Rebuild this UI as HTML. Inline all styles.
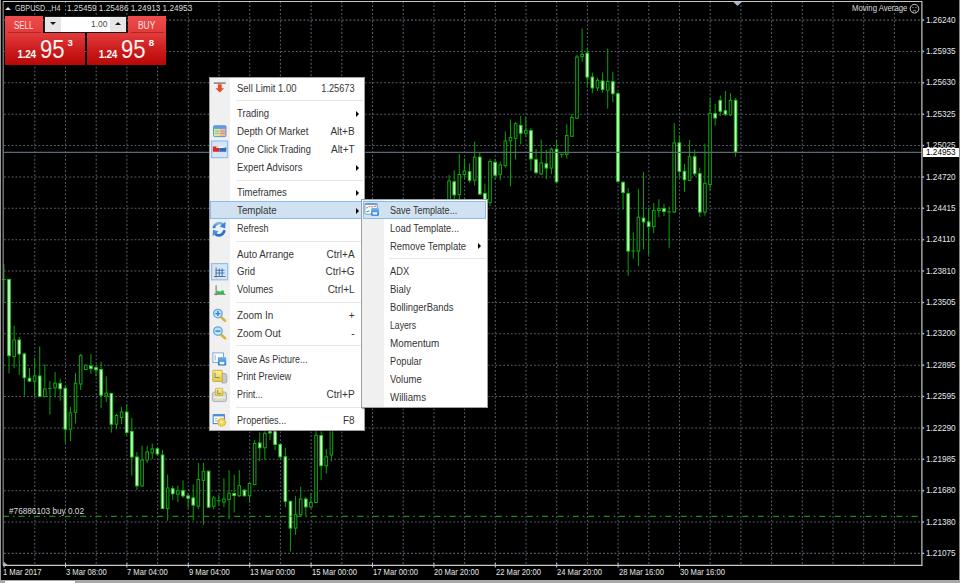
<!DOCTYPE html><html><head><meta charset="utf-8"><style>
*{margin:0;padding:0;box-sizing:border-box}
html,body{width:960px;height:583px;overflow:hidden;background:#000;font-family:"Liberation Sans", sans-serif}
.abs{position:absolute;white-space:nowrap}
svg.chart{position:absolute;left:0;top:0}
.g{stroke:#58626e;stroke-width:1.05;stroke-dasharray:1.8 2.04}
.w{stroke:#00a800;stroke-width:1}
.bb{stroke:#20c820;stroke-width:1;fill:#d8ffd0}
.bu{stroke:#10a810;stroke-width:1;fill:#000}
.pl{position:absolute;left:926px;font-size:8.2px;color:#e6e6e6;line-height:10px;height:10px}
.tl{position:absolute;top:568px;font-size:8.2px;color:#e6e6e6;line-height:10px;transform:scaleX(0.93);transform-origin:0 0}
.menu{position:absolute;background:#fff;border:1px solid #a0a0a0;box-shadow:1px 1px 1px rgba(0,0,0,.35)}
.ic{position:absolute;left:0;top:0;bottom:0;background:#f0f0f0}
.mi{position:absolute;font-size:10px;color:#353535;line-height:12px;height:12px}
.sc{position:absolute;font-size:10px;color:#353535;line-height:12px;height:12px;text-align:right}
.sep{position:absolute;height:1px;background:#e6e6e6}
.arr{position:absolute;width:0;height:0;border-top:3px solid transparent;border-bottom:3px solid transparent;border-left:3px solid #000}
</style></head><body>
<svg class="chart" width="960" height="583" viewBox="0 0 960 583">
<line x1="4" y1="20.10" x2="921" y2="20.10" class="g"/><line x1="4" y1="51.47" x2="921" y2="51.47" class="g"/><line x1="4" y1="82.84" x2="921" y2="82.84" class="g"/><line x1="4" y1="114.21" x2="921" y2="114.21" class="g"/><line x1="4" y1="145.58" x2="921" y2="145.58" class="g"/><line x1="4" y1="176.95" x2="921" y2="176.95" class="g"/><line x1="4" y1="208.32" x2="921" y2="208.32" class="g"/><line x1="4" y1="239.69" x2="921" y2="239.69" class="g"/><line x1="4" y1="271.06" x2="921" y2="271.06" class="g"/><line x1="4" y1="302.43" x2="921" y2="302.43" class="g"/><line x1="4" y1="333.80" x2="921" y2="333.80" class="g"/><line x1="4" y1="365.17" x2="921" y2="365.17" class="g"/><line x1="4" y1="396.54" x2="921" y2="396.54" class="g"/><line x1="4" y1="427.91" x2="921" y2="427.91" class="g"/><line x1="4" y1="459.28" x2="921" y2="459.28" class="g"/><line x1="4" y1="490.65" x2="921" y2="490.65" class="g"/><line x1="4" y1="522.02" x2="921" y2="522.02" class="g"/><line x1="4" y1="553.39" x2="921" y2="553.39" class="g"/><line x1="34.80" y1="1.4" x2="34.80" y2="565" class="g"/><line x1="65.50" y1="1.4" x2="65.50" y2="565" class="g"/><line x1="96.20" y1="1.4" x2="96.20" y2="565" class="g"/><line x1="126.90" y1="1.4" x2="126.90" y2="565" class="g"/><line x1="157.60" y1="1.4" x2="157.60" y2="565" class="g"/><line x1="188.30" y1="1.4" x2="188.30" y2="565" class="g"/><line x1="219.00" y1="1.4" x2="219.00" y2="565" class="g"/><line x1="249.70" y1="1.4" x2="249.70" y2="565" class="g"/><line x1="280.40" y1="1.4" x2="280.40" y2="565" class="g"/><line x1="311.10" y1="1.4" x2="311.10" y2="565" class="g"/><line x1="341.80" y1="1.4" x2="341.80" y2="565" class="g"/><line x1="372.50" y1="1.4" x2="372.50" y2="565" class="g"/><line x1="403.20" y1="1.4" x2="403.20" y2="565" class="g"/><line x1="433.90" y1="1.4" x2="433.90" y2="565" class="g"/><line x1="464.60" y1="1.4" x2="464.60" y2="565" class="g"/><line x1="495.30" y1="1.4" x2="495.30" y2="565" class="g"/><line x1="526.00" y1="1.4" x2="526.00" y2="565" class="g"/><line x1="556.70" y1="1.4" x2="556.70" y2="565" class="g"/><line x1="587.40" y1="1.4" x2="587.40" y2="565" class="g"/><line x1="618.10" y1="1.4" x2="618.10" y2="565" class="g"/><line x1="648.80" y1="1.4" x2="648.80" y2="565" class="g"/><line x1="679.50" y1="1.4" x2="679.50" y2="565" class="g"/><line x1="710.20" y1="1.4" x2="710.20" y2="565" class="g"/><line x1="740.90" y1="1.4" x2="740.90" y2="565" class="g"/><line x1="771.60" y1="1.4" x2="771.60" y2="565" class="g"/><line x1="802.30" y1="1.4" x2="802.30" y2="565" class="g"/><line x1="833.00" y1="1.4" x2="833.00" y2="565" class="g"/><line x1="863.70" y1="1.4" x2="863.70" y2="565" class="g"/><line x1="894.40" y1="1.4" x2="894.40" y2="565" class="g"/><line x1="3.90" y1="264.0" x2="3.90" y2="302.6" class="w"/><line x1="1.90" y1="279.5" x2="5.90" y2="279.5" class="w"/><line x1="9.02" y1="278.7" x2="9.02" y2="373.5" class="w"/><rect x="7.72" y="279.4" width="2.6" height="76.4" class="bb"/><line x1="14.13" y1="325.7" x2="14.13" y2="368.2" class="w"/><rect x="12.83" y="340.0" width="2.6" height="16.6" class="bu"/><line x1="19.25" y1="337.0" x2="19.25" y2="375.0" class="w"/><rect x="17.95" y="340.0" width="2.6" height="14.0" class="bb"/><line x1="24.37" y1="352.8" x2="24.37" y2="395.7" class="w"/><rect x="23.07" y="354.0" width="2.6" height="23.7" class="bb"/><line x1="29.48" y1="368.0" x2="29.48" y2="382.0" class="w"/><rect x="28.18" y="378.2" width="2.6" height="2.9" class="bb"/><line x1="34.60" y1="358.0" x2="34.60" y2="396.6" class="w"/><rect x="33.30" y="376.0" width="2.6" height="5.1" class="bu"/><line x1="39.72" y1="346.3" x2="39.72" y2="397.0" class="w"/><rect x="38.42" y="376.0" width="2.6" height="20.6" class="bb"/><line x1="44.84" y1="364.3" x2="44.84" y2="397.4" class="w"/><rect x="43.54" y="388.9" width="2.6" height="7.7" class="bu"/><line x1="49.95" y1="381.0" x2="49.95" y2="414.6" class="w"/><line x1="47.95" y1="388.4" x2="51.95" y2="388.4" class="w"/><line x1="55.07" y1="372.0" x2="55.07" y2="397.4" class="w"/><rect x="53.77" y="383.2" width="2.6" height="4.6" class="bu"/><line x1="60.19" y1="378.5" x2="60.19" y2="400.6" class="w"/><rect x="58.89" y="383.4" width="2.6" height="5.4" class="bb"/><line x1="65.30" y1="384.9" x2="65.30" y2="442.9" class="w"/><rect x="64.00" y="388.3" width="2.6" height="40.9" class="bb"/><line x1="70.42" y1="406.9" x2="70.42" y2="441.2" class="w"/><rect x="69.12" y="412.8" width="2.6" height="16.4" class="bu"/><line x1="75.54" y1="372.9" x2="75.54" y2="423.5" class="w"/><rect x="74.24" y="383.2" width="2.6" height="29.1" class="bu"/><line x1="80.66" y1="354.0" x2="80.66" y2="390.0" class="w"/><rect x="79.36" y="355.7" width="2.6" height="28.3" class="bu"/><line x1="85.77" y1="365.0" x2="85.77" y2="370.0" class="w"/><rect x="84.47" y="365.2" width="2.6" height="4.3" class="bu"/><line x1="90.89" y1="354.0" x2="90.89" y2="373.7" class="w"/><rect x="89.59" y="366.0" width="2.6" height="2.6" class="bb"/><line x1="96.01" y1="365.0" x2="96.01" y2="376.3" class="w"/><rect x="94.71" y="367.7" width="2.6" height="2.1" class="bb"/><line x1="101.12" y1="361.7" x2="101.12" y2="408.0" class="w"/><rect x="99.82" y="369.5" width="2.6" height="25.7" class="bb"/><line x1="106.24" y1="376.3" x2="106.24" y2="402.0" class="w"/><rect x="104.94" y="393.1" width="2.6" height="2.9" class="bu"/><line x1="111.36" y1="392.6" x2="111.36" y2="432.6" class="w"/><rect x="110.06" y="393.5" width="2.6" height="30.7" class="bb"/><line x1="116.47" y1="413.8" x2="116.47" y2="429.2" class="w"/><rect x="115.17" y="415.5" width="2.6" height="8.7" class="bu"/><line x1="121.59" y1="406.9" x2="121.59" y2="424.0" class="w"/><rect x="120.29" y="412.0" width="2.6" height="5.5" class="bu"/><line x1="126.71" y1="404.3" x2="126.71" y2="435.0" class="w"/><rect x="125.41" y="412.0" width="2.6" height="20.5" class="bb"/><line x1="131.82" y1="418.0" x2="131.82" y2="475.6" class="w"/><rect x="130.52" y="431.5" width="2.6" height="25.5" class="bb"/><line x1="136.94" y1="451.9" x2="136.94" y2="490.0" class="w"/><rect x="135.64" y="457.0" width="2.6" height="28.9" class="bb"/><line x1="142.06" y1="445.7" x2="142.06" y2="487.0" class="w"/><rect x="140.76" y="460.1" width="2.6" height="25.8" class="bu"/><line x1="147.18" y1="445.7" x2="147.18" y2="463.2" class="w"/><rect x="145.88" y="451.9" width="2.6" height="8.2" class="bu"/><line x1="152.29" y1="443.7" x2="152.29" y2="459.0" class="w"/><rect x="150.99" y="448.8" width="2.6" height="4.2" class="bu"/><line x1="157.41" y1="447.8" x2="157.41" y2="456.0" class="w"/><rect x="156.11" y="448.8" width="2.6" height="5.2" class="bb"/><line x1="162.53" y1="449.8" x2="162.53" y2="509.0" class="w"/><rect x="161.23" y="455.0" width="2.6" height="53.5" class="bb"/><line x1="167.64" y1="474.5" x2="167.64" y2="520.9" class="w"/><rect x="166.34" y="488.0" width="2.6" height="20.5" class="bu"/><line x1="172.76" y1="485.9" x2="172.76" y2="500.0" class="w"/><rect x="171.46" y="488.7" width="2.6" height="5.1" class="bb"/><line x1="177.88" y1="485.6" x2="177.88" y2="502.0" class="w"/><rect x="176.58" y="490.7" width="2.6" height="3.5" class="bu"/><line x1="183.00" y1="480.4" x2="183.00" y2="498.0" class="w"/><rect x="181.69" y="490.7" width="2.6" height="5.2" class="bb"/><line x1="188.11" y1="492.8" x2="188.11" y2="508.2" class="w"/><rect x="186.81" y="495.9" width="2.6" height="2.4" class="bb"/><line x1="193.23" y1="484.5" x2="193.23" y2="520.6" class="w"/><rect x="191.93" y="497.9" width="2.6" height="7.2" class="bb"/><line x1="198.35" y1="462.9" x2="198.35" y2="509.3" class="w"/><rect x="197.05" y="479.4" width="2.6" height="26.8" class="bu"/><line x1="203.46" y1="462.9" x2="203.46" y2="524.7" class="w"/><rect x="202.16" y="471.2" width="2.6" height="9.2" class="bu"/><line x1="208.58" y1="471.2" x2="208.58" y2="507.2" class="w"/><rect x="207.28" y="471.2" width="2.6" height="36.0" class="bb"/><line x1="213.70" y1="495.9" x2="213.70" y2="509.3" class="w"/><rect x="212.40" y="497.9" width="2.6" height="8.3" class="bu"/><line x1="218.81" y1="495.0" x2="218.81" y2="505.0" class="w"/><line x1="216.81" y1="500.6" x2="220.81" y2="500.6" class="w"/><line x1="223.93" y1="478.4" x2="223.93" y2="507.2" class="w"/><rect x="222.63" y="499.0" width="2.6" height="3.0" class="bu"/><line x1="229.05" y1="470.1" x2="229.05" y2="519.2" class="w"/><rect x="227.75" y="493.2" width="2.6" height="6.3" class="bu"/><line x1="234.16" y1="474.6" x2="234.16" y2="512.5" class="w"/><rect x="232.86" y="493.5" width="2.6" height="2.0" class="bb"/><line x1="239.28" y1="470.1" x2="239.28" y2="496.9" class="w"/><rect x="237.98" y="485.7" width="2.6" height="10.1" class="bu"/><line x1="244.40" y1="489.0" x2="244.40" y2="496.5" class="w"/><rect x="243.10" y="490.2" width="2.6" height="5.6" class="bb"/><line x1="249.52" y1="482.4" x2="249.52" y2="502.5" class="w"/><rect x="248.22" y="483.5" width="2.6" height="12.3" class="bu"/><line x1="254.63" y1="440.0" x2="254.63" y2="485.0" class="w"/><rect x="253.33" y="443.4" width="2.6" height="41.2" class="bu"/><line x1="259.75" y1="432.2" x2="259.75" y2="461.2" class="w"/><rect x="258.45" y="443.0" width="2.6" height="4.8" class="bb"/><line x1="264.87" y1="430.0" x2="264.87" y2="460.1" class="w"/><rect x="263.57" y="433.3" width="2.6" height="14.5" class="bu"/><line x1="269.98" y1="425.0" x2="269.98" y2="440.0" class="w"/><rect x="268.68" y="428.0" width="2.6" height="5.0" class="bb"/><line x1="275.10" y1="420.0" x2="275.10" y2="450.0" class="w"/><rect x="273.80" y="425.0" width="2.6" height="19.5" class="bb"/><line x1="280.22" y1="443.4" x2="280.22" y2="459.0" class="w"/><rect x="278.92" y="444.5" width="2.6" height="12.3" class="bb"/><line x1="285.33" y1="447.8" x2="285.33" y2="507.0" class="w"/><rect x="284.03" y="456.8" width="2.6" height="44.5" class="bb"/><line x1="290.45" y1="501.3" x2="290.45" y2="551.5" class="w"/><rect x="289.15" y="501.3" width="2.6" height="26.8" class="bb"/><line x1="295.57" y1="495.8" x2="295.57" y2="534.8" class="w"/><rect x="294.27" y="514.7" width="2.6" height="13.4" class="bu"/><line x1="300.69" y1="486.9" x2="300.69" y2="517.0" class="w"/><rect x="299.39" y="499.1" width="2.6" height="15.6" class="bu"/><line x1="305.80" y1="496.9" x2="305.80" y2="515.8" class="w"/><rect x="304.50" y="499.1" width="2.6" height="7.8" class="bb"/><line x1="310.92" y1="493.5" x2="310.92" y2="508.0" class="w"/><rect x="309.62" y="502.5" width="2.6" height="4.5" class="bu"/><line x1="316.04" y1="428.0" x2="316.04" y2="503.0" class="w"/><rect x="314.74" y="435.3" width="2.6" height="67.2" class="bu"/><line x1="321.15" y1="420.0" x2="321.15" y2="480.2" class="w"/><rect x="319.85" y="435.6" width="2.6" height="30.1" class="bb"/><line x1="326.27" y1="449.0" x2="326.27" y2="473.5" class="w"/><rect x="324.97" y="456.8" width="2.6" height="8.9" class="bu"/><line x1="331.39" y1="410.0" x2="331.39" y2="461.2" class="w"/><rect x="330.09" y="420.0" width="2.6" height="35.0" class="bu"/><line x1="449.08" y1="174.8" x2="449.08" y2="215.0" class="w"/><rect x="447.78" y="181.0" width="2.6" height="24.0" class="bu"/><line x1="454.20" y1="170.2" x2="454.20" y2="205.0" class="w"/><rect x="452.90" y="181.8" width="2.6" height="13.1" class="bb"/><line x1="459.31" y1="154.0" x2="459.31" y2="200.0" class="w"/><rect x="458.01" y="174.5" width="2.6" height="20.1" class="bu"/><line x1="464.43" y1="158.6" x2="464.43" y2="178.7" class="w"/><rect x="463.13" y="171.0" width="2.6" height="3.5" class="bu"/><line x1="469.55" y1="163.3" x2="469.55" y2="182.6" class="w"/><rect x="468.25" y="171.7" width="2.6" height="8.5" class="bb"/><line x1="474.66" y1="141.6" x2="474.66" y2="185.6" class="w"/><rect x="473.36" y="157.1" width="2.6" height="23.1" class="bu"/><line x1="479.78" y1="152.5" x2="479.78" y2="195.0" class="w"/><rect x="478.48" y="157.1" width="2.6" height="37.0" class="bb"/><line x1="484.90" y1="183.8" x2="484.90" y2="210.0" class="w"/><rect x="483.60" y="193.4" width="2.6" height="6.6" class="bb"/><line x1="490.01" y1="158.9" x2="490.01" y2="206.0" class="w"/><rect x="488.71" y="161.5" width="2.6" height="41.1" class="bu"/><line x1="495.13" y1="158.9" x2="495.13" y2="179.5" class="w"/><rect x="493.83" y="162.3" width="2.6" height="12.9" class="bb"/><line x1="500.25" y1="161.5" x2="500.25" y2="180.3" class="w"/><rect x="498.95" y="164.9" width="2.6" height="9.4" class="bu"/><line x1="505.37" y1="131.4" x2="505.37" y2="167.5" class="w"/><rect x="504.07" y="140.9" width="2.6" height="24.8" class="bu"/><line x1="510.48" y1="119.4" x2="510.48" y2="186.3" class="w"/><rect x="509.18" y="137.4" width="2.6" height="3.5" class="bu"/><line x1="515.60" y1="122.0" x2="515.60" y2="159.7" class="w"/><rect x="514.30" y="123.7" width="2.6" height="14.6" class="bu"/><line x1="520.72" y1="116.0" x2="520.72" y2="144.3" class="w"/><rect x="519.42" y="125.4" width="2.6" height="7.8" class="bb"/><line x1="525.83" y1="116.9" x2="525.83" y2="136.6" class="w"/><rect x="524.53" y="130.6" width="2.6" height="2.6" class="bu"/><line x1="530.95" y1="128.0" x2="530.95" y2="170.9" class="w"/><rect x="529.65" y="130.6" width="2.6" height="28.3" class="bb"/><line x1="536.07" y1="148.6" x2="536.07" y2="174.3" class="w"/><rect x="534.77" y="159.7" width="2.6" height="12.9" class="bb"/><line x1="541.18" y1="139.7" x2="541.18" y2="175.2" class="w"/><rect x="539.88" y="162.9" width="2.6" height="11.1" class="bu"/><line x1="546.30" y1="150.0" x2="546.30" y2="179.2" class="w"/><rect x="545.00" y="163.8" width="2.6" height="4.2" class="bb"/><line x1="551.42" y1="147.5" x2="551.42" y2="174.0" class="w"/><rect x="550.12" y="149.2" width="2.6" height="18.8" class="bu"/><line x1="556.54" y1="139.7" x2="556.54" y2="182.6" class="w"/><rect x="555.24" y="149.2" width="2.6" height="32.6" class="bb"/><line x1="561.65" y1="153.5" x2="561.65" y2="157.8" class="w"/><line x1="559.65" y1="154.3" x2="563.65" y2="154.3" class="w"/><line x1="566.77" y1="124.3" x2="566.77" y2="158.6" class="w"/><rect x="565.47" y="135.5" width="2.6" height="18.8" class="bu"/><line x1="571.89" y1="114.0" x2="571.89" y2="137.0" class="w"/><rect x="570.59" y="117.4" width="2.6" height="18.9" class="bu"/><line x1="577.00" y1="54.7" x2="577.00" y2="119.2" class="w"/><rect x="575.70" y="57.0" width="2.6" height="61.3" class="bu"/><line x1="582.12" y1="28.5" x2="582.12" y2="61.7" class="w"/><rect x="580.82" y="54.3" width="2.6" height="2.4" class="bu"/><line x1="587.24" y1="47.8" x2="587.24" y2="86.4" class="w"/><rect x="585.94" y="53.2" width="2.6" height="23.9" class="bb"/><line x1="592.36" y1="72.5" x2="592.36" y2="93.3" class="w"/><rect x="591.06" y="77.1" width="2.6" height="10.8" class="bb"/><line x1="597.47" y1="77.9" x2="597.47" y2="91.0" class="w"/><rect x="596.17" y="80.2" width="2.6" height="7.7" class="bu"/><line x1="602.59" y1="72.5" x2="602.59" y2="92.5" class="w"/><rect x="601.29" y="81.0" width="2.6" height="8.4" class="bb"/><line x1="607.71" y1="48.5" x2="607.71" y2="108.7" class="w"/><rect x="606.41" y="81.4" width="2.6" height="8.8" class="bu"/><line x1="612.82" y1="71.7" x2="612.82" y2="102.3" class="w"/><rect x="611.52" y="81.7" width="2.6" height="12.0" class="bb"/><line x1="617.94" y1="92.0" x2="617.94" y2="181.3" class="w"/><rect x="616.64" y="93.7" width="2.6" height="87.6" class="bb"/><line x1="623.06" y1="181.0" x2="623.06" y2="209.6" class="w"/><rect x="621.76" y="182.3" width="2.6" height="10.3" class="bb"/><line x1="628.17" y1="187.9" x2="628.17" y2="275.7" class="w"/><rect x="626.87" y="193.6" width="2.6" height="57.5" class="bb"/><line x1="633.29" y1="232.3" x2="633.29" y2="258.7" class="w"/><line x1="631.29" y1="251.0" x2="635.29" y2="251.0" class="w"/><line x1="638.41" y1="188.9" x2="638.41" y2="266.2" class="w"/><rect x="637.11" y="217.2" width="2.6" height="33.9" class="bu"/><line x1="643.52" y1="171.9" x2="643.52" y2="249.2" class="w"/><rect x="642.23" y="218.1" width="2.6" height="3.8" class="bb"/><line x1="648.64" y1="207.7" x2="648.64" y2="254.9" class="w"/><rect x="647.34" y="221.9" width="2.6" height="4.7" class="bb"/><line x1="653.76" y1="203.0" x2="653.76" y2="233.2" class="w"/><rect x="652.46" y="210.6" width="2.6" height="16.0" class="bu"/><line x1="658.88" y1="199.2" x2="658.88" y2="217.2" class="w"/><rect x="657.58" y="208.7" width="2.6" height="1.9" class="bu"/><line x1="663.99" y1="204.0" x2="663.99" y2="216.2" class="w"/><rect x="662.69" y="208.7" width="2.6" height="2.8" class="bb"/><line x1="669.11" y1="206.8" x2="669.11" y2="248.3" class="w"/><line x1="667.11" y1="211.9" x2="671.11" y2="211.9" class="w"/><line x1="674.23" y1="123.2" x2="674.23" y2="213.0" class="w"/><rect x="672.93" y="142.9" width="2.6" height="69.2" class="bu"/><line x1="679.34" y1="135.2" x2="679.34" y2="178.5" class="w"/><rect x="678.04" y="142.9" width="2.6" height="28.4" class="bb"/><line x1="684.46" y1="164.0" x2="684.46" y2="191.7" class="w"/><rect x="683.16" y="171.3" width="2.6" height="8.4" class="bb"/><line x1="689.58" y1="140.0" x2="689.58" y2="181.0" class="w"/><rect x="688.28" y="156.8" width="2.6" height="23.6" class="bu"/><line x1="694.69" y1="149.6" x2="694.69" y2="176.0" class="w"/><rect x="693.39" y="156.8" width="2.6" height="16.9" class="bb"/><line x1="699.81" y1="167.7" x2="699.81" y2="216.9" class="w"/><rect x="698.51" y="173.7" width="2.6" height="38.4" class="bb"/><line x1="704.93" y1="143.6" x2="704.93" y2="215.7" class="w"/><rect x="703.63" y="183.3" width="2.6" height="28.8" class="bu"/><line x1="710.05" y1="98.0" x2="710.05" y2="190.5" class="w"/><rect x="708.75" y="113.6" width="2.6" height="70.9" class="bu"/><line x1="715.16" y1="104.0" x2="715.16" y2="125.6" class="w"/><rect x="713.86" y="113.6" width="2.6" height="4.4" class="bb"/><line x1="720.28" y1="95.6" x2="720.28" y2="116.0" class="w"/><rect x="718.98" y="100.4" width="2.6" height="10.8" class="bb"/><line x1="725.40" y1="90.8" x2="725.40" y2="116.0" class="w"/><rect x="724.10" y="110.7" width="2.6" height="3.4" class="bb"/><line x1="730.51" y1="93.2" x2="730.51" y2="116.0" class="w"/><rect x="729.21" y="100.4" width="2.6" height="14.4" class="bu"/><line x1="735.63" y1="98.0" x2="735.63" y2="156.8" class="w"/><rect x="734.33" y="100.4" width="2.6" height="51.6" class="bb"/><line x1="3.5" y1="152.4" x2="921.5" y2="152.4" stroke="#5a6878" stroke-width="1.1"/><line x1="3.1" y1="516.4" x2="921" y2="516.4" stroke="#188c18" stroke-width="1.1" stroke-dasharray="6 3.9 1.6 3.9"/><line x1="3.2" y1="1.5" x2="3.2" y2="565.5" stroke="#8a8a8a" stroke-width="1.2"/><line x1="3" y1="1.5" x2="922" y2="1.5" stroke="#c8c8c8" stroke-width="1.1"/><line x1="921.9" y1="1" x2="921.9" y2="565.5" stroke="#c8c8c8" stroke-width="1.2"/><line x1="3" y1="565.3" x2="922.5" y2="565.3" stroke="#c8c8c8" stroke-width="1.2"/><path d="M922.5 18.80 L924.5 20.10 L922.5 21.40Z" fill="#c8c8c8"/><path d="M922.5 50.17 L924.5 51.47 L922.5 52.77Z" fill="#c8c8c8"/><path d="M922.5 81.54 L924.5 82.84 L922.5 84.14Z" fill="#c8c8c8"/><path d="M922.5 112.91 L924.5 114.21 L922.5 115.51Z" fill="#c8c8c8"/><path d="M922.5 144.28 L924.5 145.58 L922.5 146.88Z" fill="#c8c8c8"/><path d="M922.5 175.65 L924.5 176.95 L922.5 178.25Z" fill="#c8c8c8"/><path d="M922.5 207.02 L924.5 208.32 L922.5 209.62Z" fill="#c8c8c8"/><path d="M922.5 238.39 L924.5 239.69 L922.5 240.99Z" fill="#c8c8c8"/><path d="M922.5 269.76 L924.5 271.06 L922.5 272.36Z" fill="#c8c8c8"/><path d="M922.5 301.13 L924.5 302.43 L922.5 303.73Z" fill="#c8c8c8"/><path d="M922.5 332.50 L924.5 333.80 L922.5 335.10Z" fill="#c8c8c8"/><path d="M922.5 363.87 L924.5 365.17 L922.5 366.47Z" fill="#c8c8c8"/><path d="M922.5 395.24 L924.5 396.54 L922.5 397.84Z" fill="#c8c8c8"/><path d="M922.5 426.61 L924.5 427.91 L922.5 429.21Z" fill="#c8c8c8"/><path d="M922.5 457.98 L924.5 459.28 L922.5 460.58Z" fill="#c8c8c8"/><path d="M922.5 489.35 L924.5 490.65 L922.5 491.95Z" fill="#c8c8c8"/><path d="M922.5 520.72 L924.5 522.02 L922.5 523.32Z" fill="#c8c8c8"/><path d="M922.5 552.09 L924.5 553.39 L922.5 554.69Z" fill="#c8c8c8"/><line x1="4.10" y1="563" x2="4.10" y2="567.5" stroke="#c8c8c8" stroke-width="1"/><line x1="65.50" y1="563" x2="65.50" y2="567.5" stroke="#c8c8c8" stroke-width="1"/><line x1="126.90" y1="563" x2="126.90" y2="567.5" stroke="#c8c8c8" stroke-width="1"/><line x1="188.30" y1="563" x2="188.30" y2="567.5" stroke="#c8c8c8" stroke-width="1"/><line x1="249.70" y1="563" x2="249.70" y2="567.5" stroke="#c8c8c8" stroke-width="1"/><line x1="311.10" y1="563" x2="311.10" y2="567.5" stroke="#c8c8c8" stroke-width="1"/><line x1="372.50" y1="563" x2="372.50" y2="567.5" stroke="#c8c8c8" stroke-width="1"/><line x1="433.90" y1="563" x2="433.90" y2="567.5" stroke="#c8c8c8" stroke-width="1"/><line x1="495.30" y1="563" x2="495.30" y2="567.5" stroke="#c8c8c8" stroke-width="1"/><line x1="556.70" y1="563" x2="556.70" y2="567.5" stroke="#c8c8c8" stroke-width="1"/><line x1="618.10" y1="563" x2="618.10" y2="567.5" stroke="#c8c8c8" stroke-width="1"/><line x1="679.50" y1="563" x2="679.50" y2="567.5" stroke="#c8c8c8" stroke-width="1"/><path d="M733.4 2 L741.6 2 L737.5 6Z" fill="#a8b8c8"/><path d="M3.5 561.5 L3.5 565 L7.5 565Z" fill="#a8b8c8"/>
</svg>
<div class="abs" style="left:0;top:0;width:1px;height:583px;background:#9a9a9a"></div><div class="abs" style="left:959px;top:0;width:1px;height:583px;background:#8a8a8a"></div><div class="abs" style="left:0;top:580px;width:960px;height:3px;background:#a8a8a8"></div><div class="abs" style="left:5px;top:581px;width:70px;height:2px;background:#fff"></div><div class="pl" style="top:15.7px">1.26240</div><div class="pl" style="top:47.1px">1.25935</div><div class="pl" style="top:78.4px">1.25630</div><div class="pl" style="top:109.8px">1.25325</div><div class="pl" style="top:141.2px">1.25025</div><div class="pl" style="top:172.5px">1.24720</div><div class="pl" style="top:203.9px">1.24415</div><div class="pl" style="top:235.3px">1.24110</div><div class="pl" style="top:266.7px">1.23810</div><div class="pl" style="top:298.0px">1.23505</div><div class="pl" style="top:329.4px">1.23200</div><div class="pl" style="top:360.8px">1.22895</div><div class="pl" style="top:392.1px">1.22595</div><div class="pl" style="top:423.5px">1.22290</div><div class="pl" style="top:454.9px">1.21985</div><div class="pl" style="top:486.3px">1.21680</div><div class="pl" style="top:517.6px">1.21380</div><div class="pl" style="top:549.0px">1.21075</div><div class="abs" style="left:923px;top:147.9px;width:36px;height:9px;background:#fff"></div><div class="pl" style="top:148.3px;color:#000">1.24953</div><div class="tl" style="left:3.1px">1 Mar 2017</div><div class="tl" style="left:66.0px">3 Mar 08:00</div><div class="tl" style="left:127.4px">7 Mar 04:00</div><div class="tl" style="left:188.8px">9 Mar 04:00</div><div class="tl" style="left:250.2px">13 Mar 00:00</div><div class="tl" style="left:311.6px">15 Mar 00:00</div><div class="tl" style="left:373.0px">17 Mar 00:00</div><div class="tl" style="left:434.4px">20 Mar 20:00</div><div class="tl" style="left:495.8px">22 Mar 20:00</div><div class="tl" style="left:557.2px">24 Mar 20:00</div><div class="tl" style="left:618.6px">28 Mar 16:00</div><div class="tl" style="left:680.0px">30 Mar 16:00</div><div class="abs" style="left:5.4px;top:6.6px;width:0;height:0;border-left:3px solid transparent;border-right:3px solid transparent;border-bottom:3px solid #e8e8e8"></div><div class="abs" style="left:15px;top:4px;font-size:8.2px;line-height:10px;color:#dcdcdc;transform:scaleX(0.875);transform-origin:0 0">GBPUSD..,H4</div><div class="abs" style="left:67px;top:4px;font-size:8.2px;line-height:10px;color:#dcdcdc">1.25459 1.25486 1.24913 1.24953</div><div class="abs" style="left:9px;top:506.2px;font-size:8.6px;line-height:10px;color:#dcdcdc;transform:scaleX(0.957);transform-origin:0 0">#76886103 buy 0.02</div><div class="abs" style="left:852px;top:4px;font-size:8.2px;line-height:10px;color:#dcdcdc;transform:scaleX(0.945);transform-origin:0 0">Moving Average</div><svg class="abs" style="left:0;top:0" width="960" height="20"><circle cx="914.5" cy="8.75" r="4.3" fill="none" stroke="#d0d0d0" stroke-width="1"/><circle cx="913" cy="7.6" r="0.6" fill="#d0d0d0"/><circle cx="916" cy="7.6" r="0.6" fill="#d0d0d0"/><path d="M912.6 11.3 Q914.5 9.6 916.4 11.3" fill="none" stroke="#d0d0d0" stroke-width="0.8"/></svg>
<div class="abs" style="left:5.4px;top:16.2px;width:37.8px;height:16.4px;background:linear-gradient(#f04c4c,#e23a3a)"></div>
<div class="abs" style="left:8px;top:31.6px;width:33px;height:1px;background:#b82424"></div>
<div class="abs" style="left:14.4px;top:20.2px;font-size:10px;line-height:12px;color:#ffe4e4;transform:scaleX(0.79);transform-origin:0 0">SELL</div>
<div class="abs" style="left:128px;top:16.2px;width:37.8px;height:16.4px;background:linear-gradient(#f04c4c,#e23a3a)"></div>
<div class="abs" style="left:130.5px;top:31.6px;width:33px;height:1px;background:#b82424"></div>
<div class="abs" style="left:138px;top:20.2px;font-size:10px;line-height:12px;color:#ffe4e4;transform:scaleX(0.84);transform-origin:0 0">BUY</div>
<div class="abs" style="left:44.2px;top:15.7px;width:82.5px;height:16.9px;background:#fff;border:1px solid #1a1a1a"></div>
<div class="abs" style="left:45.2px;top:16.7px;width:15.4px;height:14.9px;background:#e6e6e6"></div>
<div class="abs" style="left:110.3px;top:16.7px;width:15.5px;height:14.9px;background:#e6e6e6"></div>
<div class="abs" style="left:49.8px;top:22.2px;width:0;height:0;border-left:3.3px solid transparent;border-right:3.3px solid transparent;border-top:3.4px solid #1a1a1a"></div>
<div class="abs" style="left:115px;top:21.9px;width:0;height:0;border-left:3.3px solid transparent;border-right:3.3px solid transparent;border-bottom:3.4px solid #1a1a1a"></div>
<div class="abs" style="left:77px;top:17.6px;width:30.4px;text-align:right;font-size:9.6px;line-height:12px;color:#484848;transform:scaleX(0.88);transform-origin:100% 0">1.00</div>
<div class="abs" style="left:5.4px;top:32.6px;width:79.4px;height:32.2px;background:linear-gradient(#e43c3c,#c81818 60%,#b80808)"></div>
<div class="abs" style="left:86.6px;top:32.6px;width:79.2px;height:32.2px;background:linear-gradient(#e43c3c,#c81818 60%,#b80808)"></div>
<div class="abs" style="left:17.6px;top:49.4px;font-size:10px;line-height:12px;font-weight:bold;color:#fff;letter-spacing:-0.3px">1.24</div><div class="abs" style="left:40.2px;top:36.2px;font-size:25.5px;line-height:27px;color:#fff2f2;transform:scaleX(0.865);transform-origin:0 0">95</div><div class="abs" style="left:67.6px;top:37.4px;font-size:9.6px;line-height:11px;font-weight:bold;color:#fff">3</div><div class="abs" style="left:98.8px;top:49.4px;font-size:10px;line-height:12px;font-weight:bold;color:#fff;letter-spacing:-0.3px">1.24</div><div class="abs" style="left:121.4px;top:36.2px;font-size:25.5px;line-height:27px;color:#fff2f2;transform:scaleX(0.865);transform-origin:0 0">95</div><div class="abs" style="left:148.8px;top:37.4px;font-size:9.6px;line-height:11px;font-weight:bold;color:#fff">8</div><div class="menu" style="left:208.5px;top:77px;width:156.7px;height:353.8px"><div class="ic" style="width:20.8px"></div></div><div class="abs" style="left:210px;top:201.1px;width:153.5px;height:18px;background:#d0e2f2;border:1px solid #8cbcec"></div><div class="sep" style="left:236px;top:99.9px;width:127px"></div><div class="sep" style="left:236px;top:179.7px;width:127px"></div><div class="sep" style="left:236px;top:241.1px;width:127px"></div><div class="sep" style="left:236px;top:301.8px;width:127px"></div><div class="sep" style="left:236px;top:345.4px;width:127px"></div><div class="sep" style="left:236px;top:406.7px;width:127px"></div><div class="mi" style="left:237px;top:82.5px;transform:scaleX(0.947);transform-origin:0 0">Sell Limit 1.00</div><div class="sc" style="left:290px;width:64.6px;top:82.5px;transform:scaleX(0.92);transform-origin:100% 0">1.25673</div><div class="mi" style="left:237px;top:107.8px;transform:scaleX(0.955);transform-origin:0 0">Trading</div><div class="arr" style="left:355.6px;top:110.5px"></div><div class="mi" style="left:237px;top:125.8px;transform:scaleX(0.973);transform-origin:0 0">Depth Of Market</div><div class="sc" style="left:290px;width:64.6px;top:125.8px;transform:scaleX(1);transform-origin:100% 0">Alt+B</div><div class="mi" style="left:237px;top:143.9px;transform:scaleX(0.93);transform-origin:0 0">One Click Trading</div><div class="sc" style="left:290px;width:64.6px;top:143.9px;transform:scaleX(1);transform-origin:100% 0">Alt+T</div><div class="mi" style="left:237px;top:161.9px;transform:scaleX(0.941);transform-origin:0 0">Expert Advisors</div><div class="arr" style="left:355.6px;top:164.6px"></div><div class="mi" style="left:237px;top:187.4px;transform:scaleX(0.95);transform-origin:0 0">Timeframes</div><div class="arr" style="left:355.6px;top:190.1px"></div><div class="mi" style="left:237px;top:205.1px;transform:scaleX(0.975);transform-origin:0 0">Template</div><div class="arr" style="left:355.6px;top:207.8px"></div><div class="mi" style="left:237px;top:222.9px;transform:scaleX(0.9);transform-origin:0 0">Refresh</div><div class="mi" style="left:237px;top:248.5px;transform:scaleX(0.976);transform-origin:0 0">Auto Arrange</div><div class="sc" style="left:290px;width:64.6px;top:248.5px;transform:scaleX(1);transform-origin:100% 0">Ctrl+A</div><div class="mi" style="left:237px;top:266.2px;transform:scaleX(0.956);transform-origin:0 0">Grid</div><div class="sc" style="left:290px;width:64.6px;top:266.2px;transform:scaleX(1);transform-origin:100% 0">Ctrl+G</div><div class="mi" style="left:237px;top:284.0px;transform:scaleX(0.945);transform-origin:0 0">Volumes</div><div class="sc" style="left:290px;width:64.6px;top:284.0px;transform:scaleX(1);transform-origin:100% 0">Ctrl+L</div><div class="mi" style="left:237px;top:310.0px;transform:scaleX(0.99);transform-origin:0 0">Zoom In</div><div class="sc" style="left:290px;width:64.6px;top:310.0px;transform:scaleX(1);transform-origin:100% 0">+</div><div class="mi" style="left:237px;top:327.8px;transform:scaleX(0.982);transform-origin:0 0">Zoom Out</div><div class="sc" style="left:290px;width:64.6px;top:327.8px;transform:scaleX(1);transform-origin:100% 0">-</div><div class="mi" style="left:237px;top:353.5px;transform:scaleX(0.892);transform-origin:0 0">Save As Picture...</div><div class="mi" style="left:237px;top:371.3px;transform:scaleX(0.919);transform-origin:0 0">Print Preview</div><div class="mi" style="left:237px;top:389.1px;transform:scaleX(0.89);transform-origin:0 0">Print...</div><div class="sc" style="left:290px;width:64.6px;top:389.1px;transform:scaleX(1);transform-origin:100% 0">Ctrl+P</div><div class="mi" style="left:237px;top:414.9px;transform:scaleX(0.913);transform-origin:0 0">Properties...</div><div class="sc" style="left:290px;width:64.6px;top:414.9px;transform:scaleX(1);transform-origin:100% 0">F8</div><svg class="abs" style="left:0;top:0" width="960" height="583" viewBox="0 0 960 583">
<defs>
<linearGradient id="gb" x1="0" y1="0" x2="0" y2="1"><stop offset="0" stop-color="#7ab8f0"/><stop offset="1" stop-color="#2a6ec8"/></linearGradient>
<linearGradient id="gy" x1="0" y1="0" x2="0" y2="1"><stop offset="0" stop-color="#fff090"/><stop offset="1" stop-color="#e8c840"/></linearGradient>
</defs>
<!-- sell limit -->
<rect x="213.8" y="82.4" width="11.9" height="1.4" fill="#7a7a7a"/>
<path d="M217.9 84.2 H221.7 V88.2 H224.1 L219.8 92.5 L215.4 88.2 H217.9Z" fill="#e84a22"/>
<!-- depth of market -->
<rect x="213.6" y="125.8" width="12.4" height="10.8" rx="1" fill="#f0b8a0" stroke="#5a8fd0" stroke-width="1"/>
<rect x="214.1" y="129" width="5.6" height="7.1" fill="#c8f0a0"/>
<rect x="213.6" y="125.8" width="12.4" height="3" fill="#5c9ce0"/>
<path d="M215 131.2h4M215 133.4h4M220.5 131.2h4.5M220.5 133.4h4.5" stroke="#a08070" stroke-width="0.6"/>
<!-- one click trading -->
<rect x="211.6" y="141" width="16" height="16.6" fill="#d6e6f4" stroke="#90c0f0" stroke-width="1.2"/>
<path d="M212.9 146.6 H217.6 L219.4 148 V151.7 H212.9Z" fill="#e02828"/>
<path d="M219.4 148 H224.5 L226.3 147 V151.7 H219.4Z" fill="#2a6cc0"/>
<rect x="216.2" y="146.6" width="7" height="1.2" fill="#fff"/>
<!-- refresh -->
<path d="M213.8 228.2 A5.6 5.6 0 0 1 223.2 224.6" fill="none" stroke="url(#gb)" stroke-width="2.6"/>
<path d="M225.6 221.8 L225.2 228.4 L219.6 226.6Z" fill="#3a84d8"/>
<path d="M224.4 230.2 A5.6 5.6 0 0 1 215 233.8" fill="none" stroke="#2a72c8" stroke-width="2.6"/>
<path d="M212.6 236.2 L213 229.8 L218.6 231.6Z" fill="#4a90dc"/>
<!-- grid -->
<rect x="211.6" y="263.6" width="16" height="16.2" fill="#d6e6f4" stroke="#90c0f0" stroke-width="1.2"/>
<path d="M219.3 268.5V276M222.1 268.5V276M215.5 270.3H224.6M215.5 273H224.6" stroke="#3070c0" stroke-width="0.9"/>
<path d="M216.1 267.3V277.6M214 276.5H225.6" stroke="#707070" stroke-width="1"/>
<!-- volumes -->
<path d="M216.6 294 V291.3 Q218 290.2 219.2 291.2 Q220.4 292 221.6 290.8 Q222.8 289.8 224 291 V294Z" fill="#28c848"/>
<path d="M216.1 285.3V295.3M214 294.2H225.6" stroke="#707070" stroke-width="1"/>
<!-- zoom in / out -->
<path d="M221.2 317.2 L225 320.8" stroke="#d8b830" stroke-width="2.6" stroke-linecap="round"/>
<circle cx="217.9" cy="313.6" r="4.3" fill="#c0e4f8" stroke="#68a8e0" stroke-width="1.3"/>
<path d="M215.4 313.6H220.4M217.9 311.1V316.1" stroke="#3a80c0" stroke-width="1.4"/>
<path d="M221.2 334.7 L225 338.3" stroke="#d8b830" stroke-width="2.6" stroke-linecap="round"/>
<circle cx="217.9" cy="331.1" r="4.3" fill="#c0e4f8" stroke="#68a8e0" stroke-width="1.3"/>
<path d="M215.4 331.1H220.4" stroke="#3a80c0" stroke-width="1.4"/>
<!-- save as picture -->
<rect x="212.9" y="352.9" width="10.6" height="9.6" fill="#fff" stroke="#78acdf" stroke-width="1"/>
<path d="M215.2 354.8V360.6" stroke="#8090a0" stroke-width="0.7"/>
<rect x="217.9" y="357" width="8.3" height="8.4" rx="1" fill="url(#gb)"/>
<rect x="219.6" y="361.8" width="4.8" height="2.6" fill="#e8f4ff"/>
<!-- print preview -->
<path d="M222 373.5 h2.8 a2 2 0 0 1 2 2 v5.5 a2 2 0 0 1 -2 2 h-2.8z" fill="#c8c8c8" stroke="#a0a0a0" stroke-width="0.8"/>
<rect x="212.8" y="370.3" width="9.4" height="11.2" rx="0.8" fill="url(#gy)" stroke="#c8a830" stroke-width="0.9"/>
<path d="M215 372.6V377.6H219.8" fill="none" stroke="#4a7ab0" stroke-width="0.8"/>
<!-- print -->
<path d="M212.4 394 Q212.4 392 214.4 392 H224.5 Q226.5 392 226.5 394 V399.8 Q226.5 401.6 224.6 401.6 H214.3 Q212.4 401.6 212.4 399.8Z" fill="#d4d4d4" stroke="#a4a4a4" stroke-width="0.8"/>
<rect x="213.4" y="396.6" width="12.2" height="1.2" fill="#f4f4f4"/>
<rect x="215.4" y="388.3" width="7.4" height="7.2" rx="0.6" fill="url(#gy)" stroke="#c8a830" stroke-width="0.7"/>
<path d="M217.6 389.8V393.6H220.8" fill="none" stroke="#4a7ab0" stroke-width="0.7"/>
<rect x="215.6" y="398.2" width="7.2" height="1.4" fill="#f0e8a8"/>
<!-- properties -->
<rect x="213.2" y="414.6" width="11.2" height="9" fill="#fff" stroke="#4a90d8" stroke-width="1.1"/>
<rect x="213.2" y="414.6" width="11.2" height="1.8" fill="#4a90d8"/>
<path d="M215 418.5h2.5M215 420.8h2.5" stroke="#6a98c8" stroke-width="0.7"/>
<circle cx="221.6" cy="422.2" r="3.9" fill="#f0d850" stroke="#d0b030" stroke-width="1.4" stroke-dasharray="1.2 0.9"/>
<circle cx="221.6" cy="422.2" r="1.3" fill="#f8f0c0"/>
</svg><div class="menu" style="left:360.9px;top:199.3px;width:126.70000000000005px;height:208.39999999999998px"><div class="ic" style="width:22.1px"></div></div><div class="abs" style="left:363.2px;top:201px;width:122.4px;height:17.6px;background:#d0e2f2;border:1px solid #8cbcec"></div><svg class="abs" style="left:0;top:0" width="960" height="583" viewBox="0 0 960 583">
<rect x="364.9" y="203.5" width="12.4" height="10.6" rx="1" fill="#fff" stroke="#6aa0d8" stroke-width="1"/>
<rect x="364.9" y="203.5" width="12.4" height="1.6" fill="#6aa0d8"/>
<path d="M366 208.2 L369.5 206.6 L372.5 206.9 L376 206.2" fill="none" stroke="#e07850" stroke-width="1.1" stroke-dasharray="2 0.8"/>
<path d="M366.5 212 L369.5 210.8" stroke="#30b040" stroke-width="1.1"/>
<rect x="371.1" y="207.9" width="7.8" height="7.8" rx="1" fill="url(#gb2)"/>
<rect x="372.6" y="212.2" width="4.6" height="2.4" fill="#e8f4ff"/>
<defs><linearGradient id="gb2" x1="0" y1="0" x2="0" y2="1"><stop offset="0" stop-color="#7ab8f0"/><stop offset="1" stop-color="#2a6ec8"/></linearGradient></defs>
</svg><div class="sep" style="left:389px;top:258.1px;width:96px"></div><div class="mi" style="left:389.9px;top:204.5px;transform:scaleX(0.904);transform-origin:0 0">Save Template...</div><div class="mi" style="left:389.9px;top:222.9px;transform:scaleX(0.937);transform-origin:0 0">Load Template...</div><div class="mi" style="left:389.9px;top:241.1px;transform:scaleX(0.946);transform-origin:0 0">Remove Template</div><div class="arr" style="left:478.3px;top:243.3px"></div><div class="mi" style="left:389.9px;top:266.0px;transform:scaleX(0.93);transform-origin:0 0">ADX</div><div class="mi" style="left:389.9px;top:284.0px;transform:scaleX(0.953);transform-origin:0 0">Bialy</div><div class="mi" style="left:389.9px;top:302.0px;transform:scaleX(0.942);transform-origin:0 0">BollingerBands</div><div class="mi" style="left:389.9px;top:319.9px;transform:scaleX(0.87);transform-origin:0 0">Layers</div><div class="mi" style="left:389.9px;top:337.8px;transform:scaleX(0.986);transform-origin:0 0">Momentum</div><div class="mi" style="left:389.9px;top:355.5px;transform:scaleX(0.921);transform-origin:0 0">Popular</div><div class="mi" style="left:389.9px;top:373.7px;transform:scaleX(0.949);transform-origin:0 0">Volume</div><div class="mi" style="left:389.9px;top:391.7px;transform:scaleX(0.968);transform-origin:0 0">Williams</div></body></html>
